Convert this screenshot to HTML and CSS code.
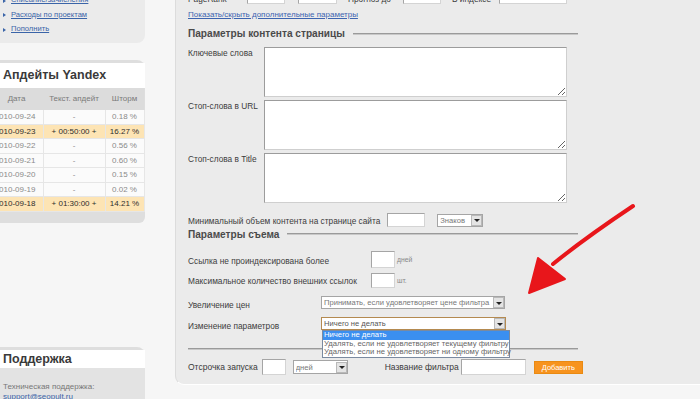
FILE: index.html
```html
<!DOCTYPE html>
<html lang="ru">
<head>
<meta charset="utf-8">
<title>Фильтр</title>
<link rel="stylesheet" href="styles.css">
</head>
<body>
<div class="page">
  <aside class="sidebar">
    <div class="panel-links">
      <ul class="links">
        <li><a href="#">Списание/зачисления</a></li>
        <li><a href="#">Расходы по проектам</a></li>
        <li><a href="#">Пополнить</a></li>
      </ul>
    </div>

    <div class="box updates">
      <div class="box-head">Апдейты Yandex</div>
      <table class="upd">
        <thead>
          <tr><th>Дата</th><th>Текст. апдейт</th><th>Шторм</th></tr>
        </thead>
        <tbody>
          <tr><td>2010-09-24</td><td>-</td><td>0.18 %</td></tr>
          <tr class="hot"><td>2010-09-23</td><td>+ 00:50:00 +</td><td>16.27 %</td></tr>
          <tr><td>2010-09-22</td><td>-</td><td>0.56 %</td></tr>
          <tr><td>2010-09-21</td><td>-</td><td>0.60 %</td></tr>
          <tr><td>2010-09-20</td><td>-</td><td>0.15 %</td></tr>
          <tr><td>2010-09-19</td><td>-</td><td>0.02 %</td></tr>
          <tr class="hot"><td>2010-09-18</td><td>+ 01:30:00 +</td><td>14.21 %</td></tr>
        </tbody>
      </table>
      <div class="box-foot"></div>
    </div>

    <div class="box support">
      <div class="box-head">Поддержка</div>
      <div class="support-body">
        <div>Техническая поддержка:</div>
        <a href="#">support@seopult.ru</a>
      </div>
    </div>
  </aside>

  <main class="main">
    <div class="toprow">
      <span class="lbl w-pr">PageRank</span>
      <input class="inp w38" type="text">
      <input class="inp w39 ml13" type="text">
      <span class="lbl w-prog">Прогноз до</span>
      <input class="inp w38" type="text">
      <span class="lbl w-idx">В индексе</span>
      <input class="inp w68" type="text">
    </div>
    <div class="linkrow"><a href="#">Показать/скрыть дополнительные параметры</a></div>

    <div class="legend"><span>Параметры контента страницы</span><i></i></div>

    <div class="areas">
      <div class="arow"><span class="alabel">Ключевые слова</span><textarea></textarea></div>
      <div class="arow"><span class="alabel">Стоп-слова в URL</span><textarea></textarea></div>
      <div class="arow"><span class="alabel">Стоп-слова в Title</span><textarea></textarea></div>
    </div>

    <div class="minrow">
      <span class="lbl">Минимальный объем контента на странице сайта</span>
      <input class="inp w38 h14 ml7" type="text">
      <div class="sel w46 ml12"><span>Знаков</span><b class="arr"></b></div>
    </div>

    <div class="legend legend2"><span>Параметры съема</span><i></i></div>

    <div class="frow r1">
      <span class="flabel">Ссылка не проиндексирована более</span>
      <input class="inp w24 h17" type="text">
      <span class="unit">дней</span>
    </div>
    <div class="frow r2">
      <span class="flabel">Максимальное количество внешних ссылок</span>
      <input class="inp w24 h15" type="text">
      <span class="unit">шт.</span>
    </div>
    <div class="srow r3">
      <span class="slabel">Увеличение цен</span>
      <div class="sel w184"><span>Принимать, если удовлетворяет цене фильтра</span><b class="arr"></b></div>
    </div>
    <div class="srow r4">
      <span class="slabel">Изменение параметров</span>
      <div class="dropwrap">
        <div class="sel w185 focus"><span>Ничего не делать</span><b class="arr"></b></div>
        <ul class="droplist">
          <li class="on">Ничего не делать</li>
          <li>Удалять, если не удовлетворяет текущему фильтру</li>
          <li>Удалять, если не удовлетворяет ни одному фильтру</li>
        </ul>
      </div>
    </div>

    <div class="hr"></div>

    <div class="bottomrow">
      <span class="blabel">Отсрочка запуска</span>
      <input class="inp w24 h16 ml4" type="text">
      <div class="sel w55 ml7"><span>дней</span><b class="arr"></b></div>
      <span class="blabel ml37">Название фильтра</span>
      <input class="inp w65 h16 ml2" type="text">
      <button class="btn" type="button">Добавить</button>
    </div>
  </main>
</div>

<svg class="arrow" width="700" height="399" viewBox="0 0 700 399" aria-hidden="true">
  <path d="M633 206 C 612 220, 585 238, 553 264" stroke="#e8161b" stroke-width="4" fill="none" stroke-linecap="round"/>
  <path d="M538 258 L 565 279 L 529 293 Z" fill="#e8161b" stroke="#e8161b" stroke-width="2" stroke-linejoin="round"/>
</svg>
</body>
</html>
```

FILE: styles.css
```css
* { box-sizing: border-box; }

html, body {
  margin: 0;
  padding: 0;
  width: 700px;
  height: 399px;
  overflow: hidden;
  background: #f6f6f6;
  font-family: "Liberation Sans", Arial, sans-serif;
  color: #3c3c3c;
}

.page {
  display: flex;
  align-items: flex-start;
}

/* ---------- sidebar ---------- */
.sidebar {
  width: 155px;
  margin-left: -10px;
  flex: none;
}

.panel-links {
  margin-top: -12px;
  padding: 5px 0 6px 13px;
  background: #ebebeb;
  border-bottom-right-radius: 8px;
}

.links {
  list-style: none;
  margin: 0;
  padding: 0;
}

.links li {
  height: 14.5px;
  line-height: 14.5px;
  font-size: 7.6px;
  padding-left: 8px;
  position: relative;
}

.links li::before {
  content: "";
  position: absolute;
  left: 0;
  top: 5.5px;
  border-left: 3px solid #3a64a8;
  border-top: 2px solid transparent;
  border-bottom: 2px solid transparent;
}

.links a {
  color: #3a64a8;
}

.box {
  background: #dedede;
  border-top-right-radius: 8px;
  padding-top: 3px;
}

.updates {
  margin-top: 17px;
  border-bottom-right-radius: 6px;
}

.box-head {
  background: #fff;
  font-weight: bold;
  font-size: 12.5px;
  color: #3a3a3a;
  padding-left: 13px;
}

.updates .box-head {
  height: 25px;
  line-height: 25px;
}

.upd {
  width: 154px;
  border-collapse: collapse;
  table-layout: fixed;
  font-size: 8px;
}

.upd th:nth-child(1), .upd td:nth-child(1) { width: 53px; }
.upd th:nth-child(2), .upd td:nth-child(2) { width: 62px; }
.upd th:nth-child(3), .upd td:nth-child(3) { width: 39px; }

.upd th {
  height: 22px;
  font-weight: normal;
  color: #7a7a7a;
  background: #dcdcdc;
  padding: 0;
  text-align: center;
}

.upd td {
  height: 14.5px;
  padding: 0;
  text-align: center;
  color: #8a8a8a;
  background: #fbfbfb;
  border-bottom: 1px solid #e6e6e6;
  border-right: 1px solid #e6e6e6;
}

.upd td:first-child {
  text-align: right;
  padding-right: 7px;
}

.upd tr.hot td {
  background: #fde4b4;
  color: #2e2e2e;
}

.box-foot {
  height: 11.5px;
}

.support {
  margin-top: 124px;
}

.support .box-head {
  height: 18px;
  line-height: 18px;
}

.support-body {
  background: #e3e3e3;
  padding: 14px 0 0 13px;
  font-size: 8px;
  color: #777;
  line-height: 9.5px;
  height: 40px;
}

.support-body a {
  color: #3a64a8;
}

/* ---------- main ---------- */
.main {
  flex: 1;
  margin-left: 30px;
  margin-top: -10px;
  background: #ebebeb;
  border-left: 1px solid #dcdcdc;
  border-bottom: 1px solid #fff;
  border-bottom-left-radius: 9px;
  padding: 0 0 9px 12px;
  font-size: 8.3px;
  color: #3c3c3c;
  position: relative;
}

.lbl, .flabel, .slabel, .blabel, .alabel { white-space: nowrap; }

.inp {
  height: 14px;
  border: 1px solid #a5a5a5;
  border-right-color: #d4d4d4;
  border-bottom-color: #d4d4d4;
  background: #fff;
  padding: 0;
  margin: 0;
  font: inherit;
  flex: none;
}

.w24 { width: 24px; }
.w38 { width: 38px; }
.w39 { width: 39px; }
.w65 { width: 65px; }
.w68 { width: 68px; }
.h14 { height: 14px; }
.h15 { height: 15px; }
.h16 { height: 16px; }
.h17 { height: 17px; }
.ml2 { margin-left: 2px; }
.ml4 { margin-left: 4px; }
.ml7 { margin-left: 7px; }
.ml12 { margin-left: 12px; }
.ml13 { margin-left: 13px; }
.ml37 { margin-left: 37px; }

.toprow {
  display: flex;
  align-items: flex-start;
  height: 16px;
}

.toprow .lbl { line-height: 14px; padding-top: 2px; }
.w-pr { width: 59px; }
.w-prog { width: 66px; padding-left: 11px; }
.w-idx { width: 58px; padding-left: 11px; }

.linkrow {
  height: 18px;
  line-height: 18px;
  font-size: 8px;
}

.linkrow a { color: #3d64b0; }

.legend {
  display: flex;
  align-items: center;
  height: 19px;
  width: 390px;
  font-weight: bold;
  font-size: 10.1px;
  color: #4a4a4a;
}

.legend i {
  flex: 1;
  height: 2px;
  margin-left: 8px;
  background: #9a9a9a;
  border-bottom: 1px solid #c8c8c8;
}

.legend2 { height: 14px; }

.areas {
  margin-top: 4px;
  display: flex;
  flex-direction: column;
  gap: 3px;
}

.arow {
  display: flex;
  align-items: flex-start;
}

.alabel {
  width: 76px;
  padding-top: 1px;
  line-height: 10px;
}

.arow textarea {
  width: 303px;
  height: 50px;
  margin: 0;
  border: 1px solid #9c9c9c;
  border-right-color: #cfcfcf;
  border-bottom-color: #cfcfcf;
  background: #fff;
  padding: 0;
  font: inherit;
}

.minrow {
  display: flex;
  align-items: center;
  margin-top: 10px;
  height: 14px;
}

.minrow .lbl { position: relative; top: 1px; }

.sel {
  height: 13px;
  background: #fff;
  border: 1px solid #a5a5a5;
  display: flex;
  align-items: center;
  padding-left: 2px;
  font-size: 7.6px;
  color: #777;
  white-space: nowrap;
  overflow: hidden;
  flex: none;
}

.sel span { flex: 1; overflow: hidden; }

.sel .arr {
  width: 11px;
  height: 11px;
  flex: none;
  background: #e4e4e4;
  border: 1px solid #b9b9b9;
  position: relative;
}

.sel .arr::after {
  content: "";
  position: absolute;
  left: 2px;
  top: 3.5px;
  border-top: 3px solid #222;
  border-left: 3px solid transparent;
  border-right: 3px solid transparent;
}

.w46 { width: 46px; }
.w55 { width: 55px; }
.w184 { width: 184px; }
.w185 { width: 185px; }

.sel.focus {
  border-color: #b48a50;
  color: #555;
}

.frow {
  display: flex;
  align-items: flex-end;
}

.flabel {
  width: 183px;
  line-height: 12px;
  position: relative;
  top: -1px;
}

.unit {
  align-self: flex-start;
  font-size: 6.8px;
  color: #888;
  margin-left: 2px;
  margin-top: 5px;
}

.r1 { margin-top: 10px; height: 17px; }
.r1 .unit { margin-top: 5px; }
.r2 { margin-top: 5px; height: 15px; }
.r2 .unit { margin-top: 4px; }

.srow {
  display: flex;
  align-items: flex-start;
  height: 13px;
  margin-top: 8px;
}

.slabel {
  width: 133px;
  padding-top: 4px;
  line-height: 10px;
}

.dropwrap {
  position: relative;
}

.droplist {
  position: absolute;
  left: 1px;
  top: 13px;
  width: 188px;
  margin: 0;
  padding: 0;
  list-style: none;
  background: #fff;
  border: 1px solid #7a8aa0;
  font-size: 7.7px;
  color: #666;
  z-index: 2;
}

.droplist li {
  height: 8.7px;
  line-height: 8.7px;
  padding-left: 1px;
  white-space: nowrap;
}

.droplist li.on {
  background: #3b8ff0;
  color: #fff;
}

.hr {
  margin-top: 18px;
  width: 390px;
  height: 2px;
  background: #9a9a9a;
  border-bottom: 1px solid #c8c8c8;
}

.bottomrow {
  margin-top: 9px;
  height: 16px;
  display: flex;
  align-items: center;
}

.blabel {
  font-size: 8.5px;
  color: #3a3a3a;
}

.bottomrow .sel { height: 14px; }

.btn {
  margin-left: 8px;
  height: 13px;
  width: 49px;
  padding: 0;
  border: 1px solid #e98a12;
  background: #f7931e;
  color: #fff;
  font: inherit;
  font-size: 7.5px;
}

/* ---------- annotation ---------- */
.arrow {
  position: absolute;
  left: 0;
  top: 0;
  pointer-events: none;
}
```
